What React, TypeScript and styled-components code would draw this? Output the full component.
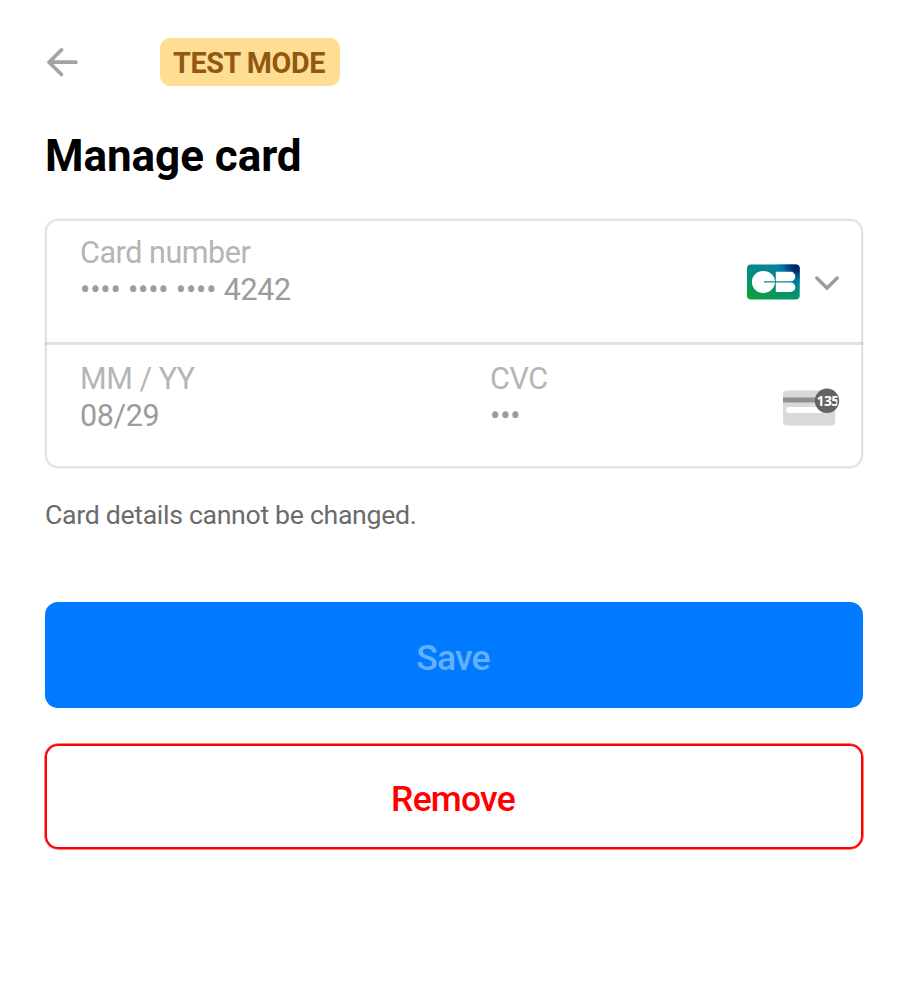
import React from "react";
import styled, { createGlobalStyle } from "styled-components";

const GlobalStyle = createGlobalStyle`
  *, *::before, *::after { box-sizing: border-box; }
  body {
    margin: 0;
    background: #ffffff;
    font-family: Roboto, "Liberation Sans", sans-serif;
  }
  button { font-family: inherit; margin: 0; }
`;

const Sheet = styled.main`
  display: flex;
  flex-direction: column;
  min-height: 1000px;
  padding: 38px 45px 0;
`;

const TopBar = styled.header`
  display: flex;
  align-items: center;
  height: 48px;
`;

const BackButton = styled.button`
  display: flex;
  width: 115px;
  padding: 0;
  border: 0;
  background: none;
`;

const ModeBadge = styled.span`
  display: flex;
  justify-content: center;
  width: 180px;
  height: 48px;
  padding-right: 2px;
  border-radius: 10px;
  background: #ffdd93;
  color: #905810;
  font-size: 28.7px;
  font-weight: 700;
  line-height: 51px;
  letter-spacing: -0.4px;
  white-space: nowrap;
`;

const Title = styled.h1`
  margin: 43px 0 0;
  color: #000000;
  font-size: 44px;
  font-weight: 700;
  line-height: 54px;
  letter-spacing: -0.05px;
  white-space: nowrap;
`;

const CardForm = styled.section`
  display: flex;
  flex-direction: column;
  height: 249px;
  margin-top: 36px;
  padding: 2px 0;
  border-radius: 13px;
  box-shadow: inset 0 0 0 2px #e3e3e3, 0 0 0 0.4px #e3e3e3;
`;

const FieldRow = styled.div<{ $divided?: boolean }>`
  display: flex;
  height: ${({ $divided }) => ($divided ? 124 : 121)}px;
  padding: ${({ $divided }) => ($divided ? 13 : 15)}px 23px 0 35px;
  border-bottom: ${({ $divided }) => ($divided ? "3px solid rgba(0, 0, 10, 0.11)" : "0")};
`;

const Field = styled.div<{ $width?: number }>`
  display: flex;
  flex-direction: column;
  flex: ${({ $width }) => ($width ? `0 0 ${$width}px` : "1")};
  font-size: 30.5px;
  line-height: 37px;
  white-space: nowrap;
`;

const Label = styled.span`
  color: #b5b5b5;
  letter-spacing: -0.45px;
`;

const Value = styled.span`
  color: #9c9c9c;
  letter-spacing: -0.16px;
`;

const Digits = styled.span`
  letter-spacing: -0.38px;
`;

const Brand = styled.div`
  display: flex;
  align-items: center;
  gap: 14px;
  height: 36px;
  margin-top: 30px;
`;

const CvcHint = styled.div`
  height: 40px;
  margin-top: 28px;
`;

const Note = styled.p`
  margin: 30px 0 0;
  color: #6b6b6b;
  font-size: 26.7px;
  line-height: 34px;
  letter-spacing: -0.33px;
  white-space: nowrap;
`;

const Action = styled.button`
  margin: 0;
  padding: 5px 2px 0 0;
  border: 0;
  border-radius: 13px;
  font-size: 35.5px;
  font-weight: 500;
  line-height: 42px;
  letter-spacing: -0.8px;
`;

const SaveButton = styled(Action)`
  height: 106px;
  margin-top: 70px;
  background: #007aff;
  color: #66afff;
`;

const RemoveButton = styled(Action)`
  height: 105px;
  margin-top: 36px;
  background: #ffffff;
  box-shadow: inset 0 0 0 2px #ff0000, 0 0 0 0.5px #ff0000;
  color: #ff0000;
`;

const BackIcon = () => (
  <svg width="36" height="32" viewBox="0 0 36 32" fill="none" stroke="#a3a3a3" strokeWidth="3.7" strokeLinecap="round" strokeLinejoin="round">
    <path d="M31 16.2H4M16.5 3.9L4 16.2l12.5 12.3" />
  </svg>
);

const CartesBancairesLogo = () => (
  <svg width="53" height="36" viewBox="0 0 53 36">
    <defs>
      <linearGradient id="cbBase" x1="0.12" y1="1" x2="0.65" y2="0">
        <stop offset="0" stopColor="#10a03c" />
        <stop offset="0.5" stopColor="#078d78" />
        <stop offset="1" stopColor="#007fa8" />
      </linearGradient>
      <radialGradient id="cbNight" gradientUnits="userSpaceOnUse" cx="51" cy="0" r="25">
        <stop offset="0" stopColor="#001653" />
        <stop offset="0.3" stopColor="#00316f" />
        <stop offset="0.65" stopColor="#0070a8" stopOpacity="0.75" />
        <stop offset="1" stopColor="#0080a8" stopOpacity="0" />
      </radialGradient>
    </defs>
    <rect width="52.7" height="35" y="0.4" rx="4" fill="url(#cbBase)" />
    <rect width="52.7" height="35" y="0.4" rx="4" fill="url(#cbNight)" />
    <path fill="#ffffff" d="M28 17.3H17v1.2h11C27.7 24.3 22.9 28.9 16.4 28.9C9.8 28.9 4.9 24 4.9 17.9S9.8 6.9 16.4 6.9C22.9 6.9 27.7 11.5 28 17.3Z" />
    <path fill="#ffffff" d="M28.8 7.8H43.6a4.75 4.75 0 0 1 0 9.5H28.8ZM28.8 18.5H43.6a4.75 4.75 0 0 1 0 9.5H28.8Z" />
  </svg>
);

const ChevronIcon = () => (
  <svg width="26" height="18" viewBox="0 0 26 18" fill="none" stroke="#9c9c9c" strokeWidth="3.4" strokeLinecap="round" strokeLinejoin="miter">
    <path d="M2.8 5L13 15L23.2 5" />
  </svg>
);

const CvcIcon = () => (
  <svg width="57" height="40" viewBox="0 0 57 40">
    <defs>
      <clipPath id="cvcDisc"><rect x="32" y="0" width="22.4" height="26" /></clipPath>
    </defs>
    <rect y="2.5" width="52.2" height="35" rx="4" fill="#d9d9d9" />
    <rect y="9.5" width="40" height="5" fill="#8f8f8f" />
    <path d="M5.3 19H39V25H5.3A2 2 0 0 1 3.3 23V21A2 2 0 0 1 5.3 19Z" fill="#ffffff" />
    <circle cx="44" cy="12.8" r="12.2" fill="#636363" />
    <text x="33.5" y="17.8" fill="#ffffff" fontFamily="Noto Sans, sans-serif" fontSize="14" fontWeight="700" letterSpacing="-0.6" clipPath="url(#cvcDisc)">135</text>
  </svg>
);

export default function App() {
  return (
    <>
      <GlobalStyle />
      <Sheet>
        <TopBar>
          <BackButton aria-label="Back"><BackIcon /></BackButton>
          <ModeBadge>TEST MODE</ModeBadge>
        </TopBar>
        <Title>Manage card</Title>
        <CardForm>
          <FieldRow $divided>
            <Field>
              <Label>Card number</Label>
              <Value>•••• •••• •••• <Digits>4242</Digits></Value>
            </Field>
            <Brand>
              <CartesBancairesLogo />
              <ChevronIcon />
            </Brand>
          </FieldRow>
          <FieldRow>
            <Field $width={410}>
              <Label>MM / YY</Label>
              <Value><Digits>08/29</Digits></Value>
            </Field>
            <Field>
              <Label>CVC</Label>
              <Value>•••</Value>
            </Field>
            <CvcHint><CvcIcon /></CvcHint>
          </FieldRow>
        </CardForm>
        <Note>Card details cannot be changed.</Note>
        <SaveButton disabled>Save</SaveButton>
        <RemoveButton>Remove</RemoveButton>
      </Sheet>
    </>
  );
}
